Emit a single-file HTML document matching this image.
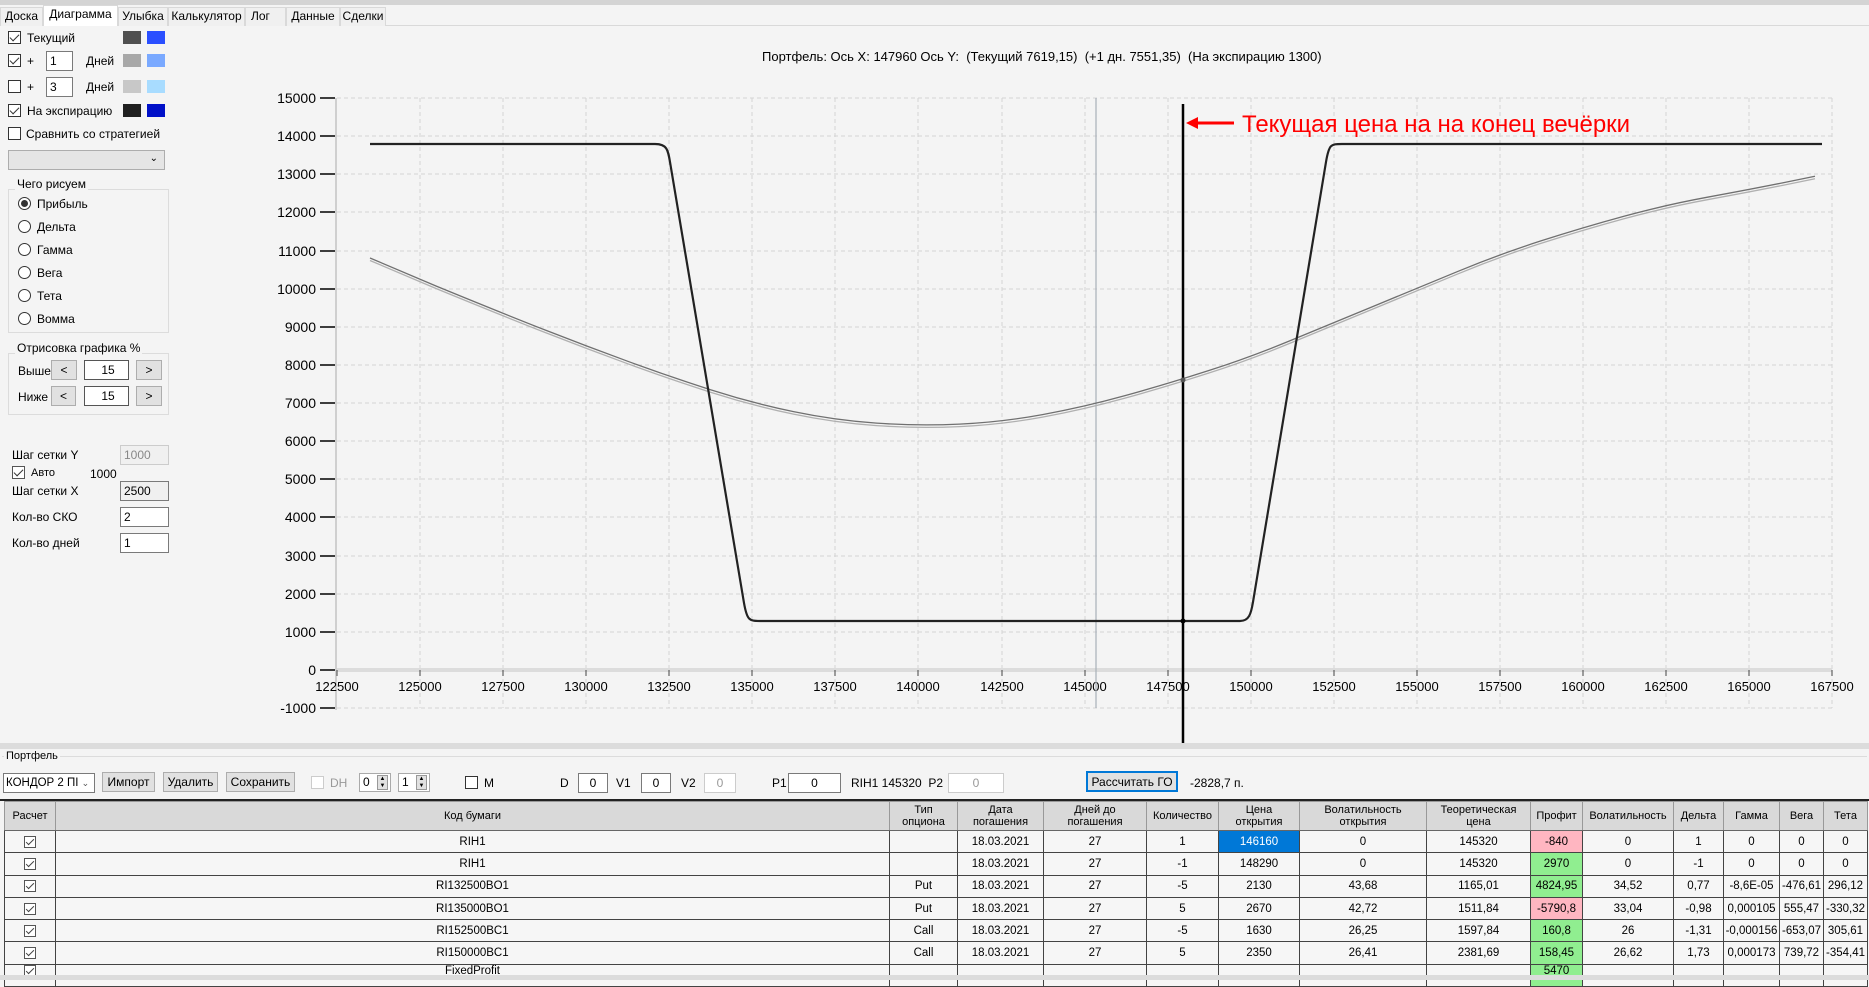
<!DOCTYPE html>
<html><head><meta charset="utf-8"><style>
*{box-sizing:border-box;margin:0;padding:0}
body{width:1869px;height:980px;background:#f4f4f4;font-family:"Liberation Sans",sans-serif;font-size:12px;color:#000;position:relative;overflow:hidden}
.a{position:absolute;white-space:nowrap}
.cb{position:absolute;width:13px;height:13px;border:1px solid #333;background:#fff}
.cb.c::after{content:"";position:absolute;left:3px;top:0px;width:4px;height:8px;border:solid #333;border-width:0 1.5px 1.5px 0;transform:rotate(45deg)}
.sw{position:absolute;width:18px;height:13px}
.tb{position:absolute;background:#fff;border:1px solid #7a7a7a;height:20px;padding-left:3px;line-height:18px}
.btn{position:absolute;background:#e1e1e1;border:1px solid #adadad;text-align:center;height:20px;line-height:18px}
.rd{position:absolute;width:13px;height:13px;border:1px solid #333;border-radius:50%;background:#fff}
.gb{position:absolute;border:1px solid #dcdcdc}
.gl{position:absolute;background:#f4f4f4;padding:0 2px}
.tab{position:absolute;top:7px;height:19px;border:1px solid #d9d9d9;border-bottom:none;background:#f0f0f0;line-height:17px;text-align:center}
table{position:absolute;left:4px;top:801px;border-collapse:collapse;table-layout:fixed;font-size:11.5px}
td,th{border:1px solid #444;border-top-color:#222;text-align:center;overflow:hidden;white-space:nowrap;font-weight:normal}
th{background:#d9d9d9;height:29px;line-height:12px;border-color:#999;border-bottom:1px solid #666;font-size:11px}
td{height:22.3px;background:#f6f6f6}
.r{background:#ffb6c1}.g{background:#90ee90}.b{background:#0078d7;color:#fff}
.ck{display:inline-block;width:12px;height:12px;border:1px solid #555;background:#fff;position:relative;vertical-align:middle}
.ck::after{content:"";position:absolute;left:3px;top:0;width:3px;height:7px;border:solid #444;border-width:0 1px 1px 0;transform:rotate(45deg)}
</style></head><body>
<div class="a" style="left:0;top:0;width:1869px;height:5px;background:#d4d4d4"></div>
<div class="a" style="left:0;top:25px;width:1869px;height:1px;background:#d9d9d9"></div>
<div class="tab" style="left:0;width:43px">Доска</div>
<div class="tab" style="left:43px;width:75px;top:5px;height:21px;background:#fff">Диаграмма</div>
<div class="tab" style="left:118px;width:50px">Улыбка</div>
<div class="tab" style="left:168px;width:77px">Калькулятор</div>
<div class="tab" style="left:245px;width:41px;text-align:left;padding-left:5px">Лог</div>
<div class="tab" style="left:286px;width:54px">Данные</div>
<div class="tab" style="left:340px;width:46px">Сделки</div>

<div class="cb c" style="left:8px;top:31px"></div><div class="a" style="left:27px;top:31px">Текущий</div>
<div class="sw" style="left:123px;top:31px;background:#505050"></div><div class="sw" style="left:147px;top:31px;background:#2a4fff"></div>
<div class="cb c" style="left:8px;top:54px"></div><div class="a" style="left:27px;top:54px">+</div>
<div class="tb" style="left:46px;top:51px;width:27px">1</div><div class="a" style="left:86px;top:54px">Дней</div>
<div class="sw" style="left:123px;top:54px;background:#a8a8a8"></div><div class="sw" style="left:147px;top:54px;background:#7aa9ff"></div>
<div class="cb" style="left:8px;top:80px"></div><div class="a" style="left:27px;top:80px">+</div>
<div class="tb" style="left:46px;top:77px;width:27px">3</div><div class="a" style="left:86px;top:80px">Дней</div>
<div class="sw" style="left:123px;top:80px;background:#c8c8c8"></div><div class="sw" style="left:147px;top:80px;background:#a8dcff"></div>
<div class="cb c" style="left:8px;top:104px"></div><div class="a" style="left:27px;top:104px">На экспирацию</div>
<div class="sw" style="left:123px;top:104px;background:#202020"></div><div class="sw" style="left:147px;top:104px;background:#0010c8"></div>
<div class="cb" style="left:8px;top:127px"></div><div class="a" style="left:26px;top:127px">Сравнить со стратегией</div>
<div class="a" style="left:8px;top:150px;width:157px;height:20px;background:#e5e5e5;border:1px solid #adadad"><span class="a" style="right:6px;top:2px;font-size:10px">&#8964;</span></div>

<div class="gb" style="left:8px;top:189px;width:161px;height:144px"></div>
<div class="gl" style="left:15px;top:177px">Чего рисуем</div>
<div class="rd" style="left:18px;top:197px"></div><div class="a" style="left:21px;top:200px;width:7px;height:7px;border-radius:50%;background:#333"></div>
<div class="a" style="left:37px;top:197px">Прибыль</div>
<div class="rd" style="left:18px;top:220px"></div><div class="a" style="left:37px;top:220px">Дельта</div>
<div class="rd" style="left:18px;top:243px"></div><div class="a" style="left:37px;top:243px">Гамма</div>
<div class="rd" style="left:18px;top:266px"></div><div class="a" style="left:37px;top:266px">Вега</div>
<div class="rd" style="left:18px;top:289px"></div><div class="a" style="left:37px;top:289px">Тета</div>
<div class="rd" style="left:18px;top:312px"></div><div class="a" style="left:37px;top:312px">Вомма</div>

<div class="gb" style="left:8px;top:353px;width:161px;height:62px"></div>
<div class="gl" style="left:15px;top:341px">Отрисовка графика %</div>
<div class="a" style="left:18px;top:364px">Выше</div>
<div class="btn" style="left:51px;top:360px;width:26px">&lt;</div><div class="tb" style="left:84px;top:360px;width:45px;text-align:center;border-color:#555">15</div><div class="btn" style="left:136px;top:360px;width:26px">&gt;</div>
<div class="a" style="left:18px;top:390px">Ниже</div>
<div class="btn" style="left:51px;top:386px;width:25px">&lt;</div><div class="tb" style="left:84px;top:386px;width:45px;text-align:center;border-color:#555">15</div><div class="btn" style="left:136px;top:386px;width:26px">&gt;</div>

<div class="a" style="left:12px;top:448px">Шаг сетки Y</div><div class="tb" style="left:120px;top:445px;width:49px;background:#f0f0f0;border-color:#ccc;color:#888">1000</div>
<div class="cb c" style="left:12px;top:466px;width:13px;height:13px;border-color:#555"></div><div class="a" style="left:31px;top:467px;font-size:11px">Авто</div><div class="a" style="left:90px;top:467px">1000</div>
<div class="a" style="left:12px;top:484px">Шаг сетки X</div><div class="tb" style="left:120px;top:481px;width:49px;background:#f0f0f0">2500</div>
<div class="a" style="left:12px;top:510px">Кол-во СКО</div><div class="tb" style="left:120px;top:507px;width:49px">2</div>
<div class="a" style="left:12px;top:536px">Кол-во дней</div><div class="tb" style="left:120px;top:533px;width:49px">1</div>

<div class="a" style="left:762px;top:49px;font-size:13px">Портфель: Ось X: 147960 Ось Y:&nbsp; (Текущий 7619,15)&nbsp; (+1 дн. 7551,35)&nbsp; (На экспирацию 1300)</div>

<svg class="a" style="left:0;top:0" width="1869" height="745" font-family="Liberation Sans, sans-serif">
<g stroke="#d4d4d4" stroke-dasharray="4,3" stroke-width="1">
<path d="M337 98H1832M337 136H1832M337 174H1832M337 212H1832M337 251H1832M337 289H1832M337 327H1832M337 365H1832M337 403H1832M337 441H1832M337 479H1832M337 517H1832M337 556H1832M337 594H1832M337 632H1832M337 708H1832"/>
<path d="M420 98V708M503 98V708M586 98V708M669 98V708M752 98V708M835 98V708M918 98V708M1002 98V708M1085 98V708M1168 98V708M1251 98V708M1334 98V708M1417 98V708M1500 98V708M1583 98V708M1666 98V708M1749 98V708M1832 98V708"/>
</g>
<path d="M337 670H1832" stroke="#dcdcdc" stroke-width="4"/>
<path d="M336 98V710" stroke="#cfcfcf" stroke-width="2"/>
<g stroke="#000" stroke-width="1.5">
<path d="M320 98H335M320 136H335M320 174H335M320 212H335M320 251H335M320 289H335M320 327H335M320 365H335M320 403H335M320 441H335M320 479H335M320 517H335M320 556H335M320 594H335M320 632H335M320 670H335M320 708H335"/>
</g>
<path d="M337 670v6M420 670v6M503 670v6M586 670v6M669 670v6M752 670v6M835 670v6M918 670v6M1002 670v6M1085 670v6M1168 670v6M1251 670v6M1334 670v6M1417 670v6M1500 670v6M1583 670v6M1666 670v6M1749 670v6M1832 670v6" stroke="#444"/>
<g font-size="14" text-anchor="end">
<text x="316" y="103">15000</text><text x="316" y="141">14000</text><text x="316" y="179">13000</text><text x="316" y="217">12000</text><text x="316" y="256">11000</text><text x="316" y="294">10000</text><text x="316" y="332">9000</text><text x="316" y="370">8000</text><text x="316" y="408">7000</text><text x="316" y="446">6000</text><text x="316" y="484">5000</text><text x="316" y="522">4000</text><text x="316" y="561">3000</text><text x="316" y="599">2000</text><text x="316" y="637">1000</text><text x="316" y="675">0</text><text x="316" y="713">-1000</text>
</g>
<g font-size="13" text-anchor="middle">
<text x="337" y="691">122500</text><text x="420" y="691">125000</text><text x="503" y="691">127500</text><text x="586" y="691">130000</text><text x="669" y="691">132500</text><text x="752" y="691">135000</text><text x="835" y="691">137500</text><text x="918" y="691">140000</text><text x="1002" y="691">142500</text><text x="1085" y="691">145000</text><text x="1168" y="691">147500</text><text x="1251" y="691">150000</text><text x="1334" y="691">152500</text><text x="1417" y="691">155000</text><text x="1500" y="691">157500</text><text x="1583" y="691">160000</text><text x="1666" y="691">162500</text><text x="1749" y="691">165000</text><text x="1832" y="691">167500</text>
</g>
<path d="M1096 98V708" stroke="#a8b0b8" stroke-width="1.2"/>
<path id="gc" fill="none" stroke="#b0b0b0" stroke-width="1.3" transform="translate(0,2.5)" d="M370,258 L436,286 Q503,313.5 544.5,329.75 Q586,346 627.5,361.2 Q669,376.4 710.5,389.7 Q752,403 793.5,411.65 Q835,420.3 876.5,423.15 Q918,426 959.5,424.1 Q1001,422.2 1042.5,414.6 Q1084,407 1125.5,395.5 Q1167,384 1208.5,370.65 Q1250,357.3 1291.5,340.15 Q1333,323 1374.5,305.85 Q1416,288.7 1457.5,271.55 Q1499,254.4 1540.5,241.05 Q1582,227.7 1624,216.25 Q1666,204.8 1707.5,197.2 Q1749,189.6 1782,183 L1815,176.2"/>
<path fill="none" stroke="#707070" stroke-width="1.3" d="M370,258 L436,286 Q503,313.5 544.5,329.75 Q586,346 627.5,361.2 Q669,376.4 710.5,389.7 Q752,403 793.5,411.65 Q835,420.3 876.5,423.15 Q918,426 959.5,424.1 Q1001,422.2 1042.5,414.6 Q1084,407 1125.5,395.5 Q1167,384 1208.5,370.65 Q1250,357.3 1291.5,340.15 Q1333,323 1374.5,305.85 Q1416,288.7 1457.5,271.55 Q1499,254.4 1540.5,241.05 Q1582,227.7 1624,216.25 Q1666,204.8 1707.5,197.2 Q1749,189.6 1782,183 L1815,176.2"/>
<path fill="none" stroke="#222" stroke-width="2.2" d="M370 144L655 144C667 144 668 150 670 162L744 603C747 620 749 621 760 621L1240 621C1249 621 1251 614 1253 602L1326 162C1329 144 1331 144 1342 144L1822 144"/>
<path d="M1183 104V745" stroke="#000" stroke-width="2.5"/>
<circle cx="1183" cy="621" r="2.5"/><circle cx="1183" cy="380" r="2.5" fill="#555"/>
<path d="M1196 123H1234" stroke="#f00" stroke-width="3"/><path d="M1186 123L1198 117V129Z" fill="#f00"/>
<text x="1242" y="132" font-size="24" fill="#f00">Текущая цена на на конец вечёрки</text>
</svg>

<div class="a" style="left:0;top:743px;width:1869px;height:6px;background:#dcdcdc"></div>
<div class="a" style="left:2px;top:756px;width:1865px;height:1px;background:#dcdcdc"></div>
<div class="gl" style="left:4px;top:750px;font-size:11px">Портфель</div>

<div class="a" style="left:3px;top:773px;width:92px;height:20px;background:#fff;border:1px solid #7a7a7a;line-height:18px;padding-left:2px;font-size:11.5px">КОНДОР 2 ПІ <span style="font-size:9px;color:#555">&#8964;</span></div>
<div class="btn" style="left:102px;top:772px;width:53px">Импорт</div>
<div class="btn" style="left:163px;top:772px;width:55px">Удалить</div>
<div class="btn" style="left:226px;top:772px;width:69px">Сохранить</div>
<div class="cb" style="left:311px;top:776px;border-color:#ccc"></div><div class="a" style="left:330px;top:776px;color:#999">DH</div>
<div class="tb" style="left:359px;top:773px;width:32px;height:19px;border-color:#aaa;line-height:16px">0</div><div class="a" style="left:377px;top:775px;width:11px;height:15px;background:#e1e1e1;border:1px solid #999;font-size:6px;line-height:7px;text-align:center">▲<br>▼</div>
<div class="tb" style="left:398px;top:773px;width:32px;height:19px;border-color:#aaa;line-height:16px">1</div><div class="a" style="left:416px;top:775px;width:11px;height:15px;background:#e1e1e1;border:1px solid #999;font-size:6px;line-height:7px;text-align:center">▲<br>▼</div>
<div class="cb" style="left:465px;top:776px"></div><div class="a" style="left:484px;top:776px">M</div>
<div class="a" style="left:560px;top:776px">D</div><div class="tb" style="left:578px;top:773px;width:30px;text-align:center;padding:0">0</div>
<div class="a" style="left:616px;top:776px">V1</div><div class="tb" style="left:641px;top:773px;width:30px;text-align:center;padding:0">0</div>
<div class="a" style="left:681px;top:776px">V2</div><div class="tb" style="left:704px;top:773px;width:32px;text-align:center;padding:0;border-color:#ccc;color:#999">0</div>
<div class="a" style="left:772px;top:776px">P1</div><div class="tb" style="left:788px;top:773px;width:53px;text-align:center;padding:0">0</div>
<div class="a" style="left:851px;top:776px">RIH1 145320&nbsp; P2</div><div class="tb" style="left:948px;top:773px;width:56px;text-align:center;padding:0;border-color:#ccc;color:#999">0</div>
<div class="btn" style="left:1086px;top:771px;width:92px;height:21px;border:2px solid #0078d7">Рассчитать ГО</div>
<div class="a" style="left:1190px;top:776px">-2828,7 п.</div>
<div class="a" style="left:0;top:799px;width:1869px;height:2px;background:#222"></div>

<table>
<colgroup><col style="width:51px"><col style="width:834px"><col style="width:68px"><col style="width:86px"><col style="width:103px"><col style="width:72px"><col style="width:81px"><col style="width:127px"><col style="width:104px"><col style="width:52px"><col style="width:91px"><col style="width:50px"><col style="width:56px"><col style="width:44px"><col style="width:44px"></colgroup>
<tr><th>Расчет</th><th>Код бумаги</th><th>Тип<br>опциона</th><th>Дата<br>погашения</th><th>Дней до<br>погашения</th><th>Количество</th><th>Цена<br>открытия</th><th>Волатильность<br>открытия</th><th>Теоретическая<br>цена</th><th>Профит</th><th>Волатильность</th><th>Дельта</th><th>Гамма</th><th>Вега</th><th>Тета</th></tr>
<tr><td><span class="ck"></span></td><td>RIH1</td><td></td><td>18.03.2021</td><td>27</td><td>1</td><td class="b">146160</td><td>0</td><td>145320</td><td class="r">-840</td><td>0</td><td>1</td><td>0</td><td>0</td><td>0</td></tr>
<tr><td><span class="ck"></span></td><td>RIH1</td><td></td><td>18.03.2021</td><td>27</td><td>-1</td><td>148290</td><td>0</td><td>145320</td><td class="g">2970</td><td>0</td><td>-1</td><td>0</td><td>0</td><td>0</td></tr>
<tr><td><span class="ck"></span></td><td>RI132500BO1</td><td>Put</td><td>18.03.2021</td><td>27</td><td>-5</td><td>2130</td><td>43,68</td><td>1165,01</td><td class="g">4824,95</td><td>34,52</td><td>0,77</td><td>-8,6E-05</td><td>-476,61</td><td>296,12</td></tr>
<tr><td><span class="ck"></span></td><td>RI135000BO1</td><td>Put</td><td>18.03.2021</td><td>27</td><td>5</td><td>2670</td><td>42,72</td><td>1511,84</td><td class="r">-5790,8</td><td>33,04</td><td>-0,98</td><td>0,000105</td><td>555,47</td><td>-330,32</td></tr>
<tr><td><span class="ck"></span></td><td>RI152500BC1</td><td>Call</td><td>18.03.2021</td><td>27</td><td>-5</td><td>1630</td><td>26,25</td><td>1597,84</td><td class="g">160,8</td><td>26</td><td>-1,31</td><td>-0,000156</td><td>-653,07</td><td>305,61</td></tr>
<tr><td><span class="ck"></span></td><td>RI150000BC1</td><td>Call</td><td>18.03.2021</td><td>27</td><td>5</td><td>2350</td><td>26,41</td><td>2381,69</td><td class="g">158,45</td><td>26,62</td><td>1,73</td><td>0,000173</td><td>739,72</td><td>-354,41</td></tr>
<tr><td style="vertical-align:top"><span class="ck"></span></td><td style="vertical-align:top">FixedProfit</td><td></td><td></td><td></td><td></td><td></td><td></td><td></td><td class="g" style="vertical-align:top">5470</td><td></td><td></td><td></td><td></td><td></td></tr>
</table>
<div class="a" style="left:0;top:975px;width:1869px;height:5px;background:#dcdcdc"></div>
</body></html>
